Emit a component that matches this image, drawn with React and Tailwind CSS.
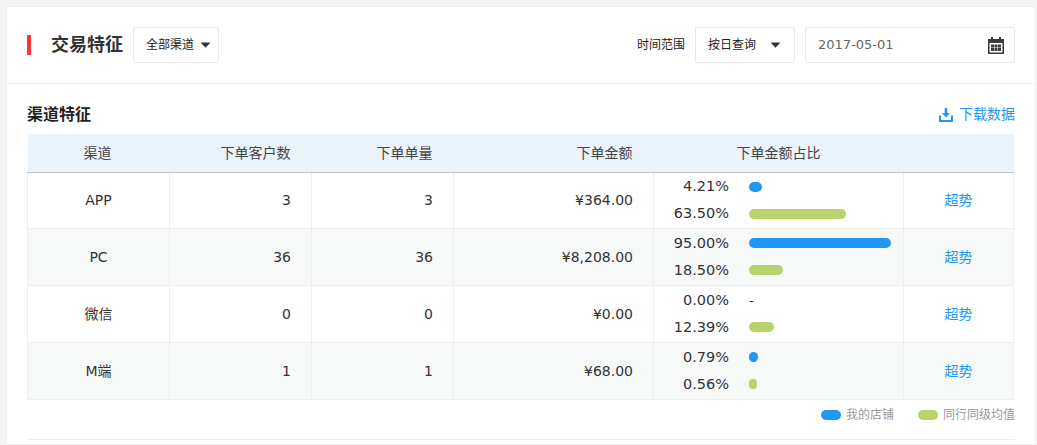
import React from "react";

const font = { fontFamily: '"DejaVu Sans", "Noto Sans CJK SC", sans-serif' };

const rows = [
  { name: "APP", a: "3", b: "3", c: "¥364.00", p1: "4.21%", w1: 13, p2: "63.50%", w2: 97, h: "h-[56px]" },
  { name: "PC", a: "36", b: "36", c: "¥8,208.00", p1: "95.00%", w1: 142, p2: "18.50%", w2: 34, h: "h-[57px]" },
  { name: "微信", a: "0", b: "0", c: "¥0.00", p1: "0.00%", w1: 0, p2: "12.39%", w2: 25, h: "h-[57px]" },
  { name: "M端", a: "1", b: "1", c: "¥68.00", p1: "0.79%", w1: 9, p2: "0.56%", w2: 8, h: "h-[57px]" },
];

function Caret({ className = "" }) {
  return (
    <svg width="11" height="6" viewBox="0 0 11 6" className={className}>
      <path d="M0.5 0.5h10L5.5 5.8z" fill="#333" />
    </svg>
  );
}

function Bar({ pct, w, color }) {
  return (
    <div className="flex h-[27px] items-center">
      <span className="w-[75px] text-right text-[14.5px] leading-none text-[#333]">{pct}</span>
      <span className="ml-5 flex items-center">
        {w > 0 ? (
          <span className={`block h-[10px] rounded-[5px] ${color}`} style={{ width: w }} />
        ) : (
          <span className="text-[13px] leading-none text-[#333]">-</span>
        )}
      </span>
    </div>
  );
}

export default function App() {
  return (
    <div className="h-[445px] w-[1037px] overflow-hidden bg-[#f3f3f3] pl-[6px] pt-[6px]" style={font}>
      <div className="h-[439px] w-[1030px] border border-[#eeeeee] bg-white">
        <div className="flex h-[77px] items-center justify-between border-b border-[#eeeeee] px-5">
          <div className="flex items-center">
            <span className="h-5 w-1 bg-[#ff3333]" />
            <span className="ml-5 text-[18px] font-bold leading-none text-[#333]">交易特征</span>
            <div className="ml-[10px] flex h-9 w-[86px] items-center rounded-[2px] border border-[#e8e8e8] pl-3">
              <span className="text-xs text-[#222]">全部渠道</span>
              <Caret className="ml-[6px]" />
            </div>
          </div>
          <div className="flex items-center">
            <span className="text-xs text-[#222]">时间范围</span>
            <div className="ml-[10px] flex h-9 w-[100px] items-center rounded-[2px] border border-[#e8e8e8] pl-3">
              <span className="text-xs text-[#222]">按日查询</span>
              <Caret className="ml-[14px]" />
            </div>
            <div className="ml-[10px] flex h-9 w-[210px] items-center justify-between rounded-[2px] border border-[#e8e8e8] pl-3 pr-[10px]">
              <span className="text-[13px] text-[#666]">2017-05-01</span>
              <svg width="16" height="17" viewBox="0 0 16 17">
                <path fillRule="evenodd" fill="#3a3a3a" d="M3 0h2v2h6V0h2v2h3v15H0V2h3zM1.5 6v9.5h13V6zM3 7.5h3v3H3zM6.5 7.5h3v3h-3zM10 7.5h3v3h-3zM3 11h3v3H3zM6.5 11h3v3h-3zM10 11h3v3h-3z" />
              </svg>
            </div>
          </div>
        </div>

        <div className="px-5">
          <div className="flex h-[50px] items-center justify-between pt-[11px]">
            <span className="text-[16px] font-bold leading-none text-[#222]">渠道特征</span>
            <span className="flex items-center text-[14px] text-[#2196f3]">
              <svg width="14" height="14" viewBox="0 0 14 14" className="mr-[6px]">
                <path fill="#2196f3" d="M5.7 0h2.6v5H11L7 9.6 3 5H5.7zM0 7.5h2v4.5h10V7.5h2V14H0z" />
              </svg>
              下载数据
            </span>
          </div>

          <table className="w-[986px] table-fixed border-collapse text-[14px] text-[#333]">
            <thead>
              <tr className="h-[38px] bg-[#ebf3fa] text-[#444]">
                <th className="w-[142px] border-b border-[#c4c6ca] pt-[2px] pr-[2px] text-center font-normal">渠道</th>
                <th className="w-[142px] border-b border-[#c4c6ca] pt-[2px] pr-[21px] text-right font-normal">下单客户数</th>
                <th className="w-[142px] border-b border-[#c4c6ca] pt-[2px] pr-[21px] text-right font-normal">下单单量</th>
                <th className="w-[200px] border-b border-[#c4c6ca] pt-[2px] pr-[21px] text-right font-normal">下单金额</th>
                <th className="w-[250px] border-b border-[#c4c6ca] pt-[2px] pl-[83px] text-left font-normal">下单金额占比</th>
                <th className="w-[110px] border-b border-[#c4c6ca] font-normal" />
              </tr>
            </thead>
            <tbody>
              {rows.map((r, i) => {
                const pad = i === 0 ? "" : "pt-[2px]";
                return (
                  <tr key={r.name} className={`${r.h} ${i % 2 ? "bg-[#f7f9f9]" : "bg-white"}`}>
                    <td className={`border-x border-b border-[#eeeeee] text-center ${pad}`}>{r.name}</td>
                    <td className={`border-x border-b border-[#eeeeee] pr-5 text-right ${pad}`}>{r.a}</td>
                    <td className={`border-x border-b border-[#eeeeee] pr-5 text-right ${pad}`}>{r.b}</td>
                    <td className={`border-x border-b border-[#eeeeee] pr-5 text-right ${pad}`}>{r.c}</td>
                    <td className="border-x border-b border-[#eeeeee] p-0">
                      <Bar pct={r.p1} w={r.w1} color="bg-[#2196f3]" />
                      <Bar pct={r.p2} w={r.w2} color="bg-[#b6d36c]" />
                    </td>
                    <td className={`border-x border-b border-[#eeeeee] text-center text-[#2196f3] ${pad}`}>超势</td>
                  </tr>
                );
              })}
            </tbody>
          </table>

          <div className="flex h-[40px] items-start justify-end border-b border-[#eeeeee] pt-[7px] text-xs text-[#999]">
            <span className="flex items-center">
              <span className="h-[10px] w-5 rounded-[5px] bg-[#2196f3]" />
              <span className="ml-[5px]">我的店铺</span>
            </span>
            <span className="ml-6 flex items-center">
              <span className="h-[10px] w-5 rounded-[5px] bg-[#b6d36c]" />
              <span className="ml-[5px]">同行同级均值</span>
            </span>
          </div>
        </div>
      </div>
    </div>
  );
}
